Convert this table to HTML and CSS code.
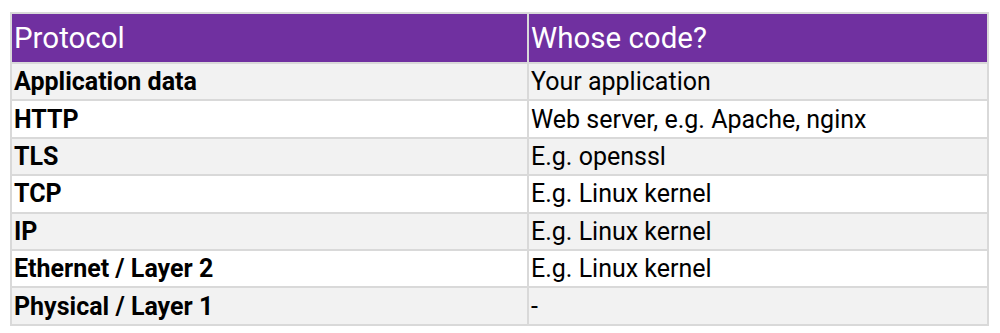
FILE: index.html
```html
<!DOCTYPE html>
<html lang="en">
<head>
    <meta charset="UTF-8">
    <title>Protocol stack</title>
    <link rel="stylesheet" href="styles.css">
</head>
<body>
    <table class="stack">
        <thead>
            <tr>
                <th class="col-proto">Protocol</th>
                <th>Whose code?</th>
            </tr>
        </thead>
        <tbody>
            <tr><td class="proto">Application data</td><td>Your application</td></tr>
            <tr><td class="proto">HTTP</td><td>Web server, e.g. Apache, nginx</td></tr>
            <tr><td class="proto">TLS</td><td>E.g. openssl</td></tr>
            <tr><td class="proto">TCP</td><td>E.g. Linux kernel</td></tr>
            <tr><td class="proto">IP</td><td>E.g. Linux kernel</td></tr>
            <tr><td class="proto">Ethernet / Layer 2</td><td>E.g. Linux kernel</td></tr>
            <tr><td class="proto">Physical / Layer 1</td><td>-</td></tr>
        </tbody>
    </table>
</body>
</html>
```
FILE: styles.css
```css
:root {
    --purple: #7030a0;
    --row-alt: #f2f2f2;
    --line: #d9d9d9;
}
* { box-sizing: border-box; margin: 0; padding: 0; }
body {
    font-family: Roboto, 'Liberation Sans', sans-serif;
    background: #fff;
    color: #000;
    padding: 12px 0 0 10px;
}
.stack {
    border-collapse: collapse;
    width: 979px;
    table-layout: fixed;
}
.stack th, .stack td {
    border: 2px solid var(--line);
    text-align: left;
    padding: 0 2px;
    white-space: nowrap;
}
.stack th {
    background: var(--purple);
    color: #fff;
    font-weight: 400;
    font-size: 29.5px;
    height: 50px;
}
.col-proto { width: 517px; }
.stack td {
    font-size: 25px;
    height: 37.4px;
}
.stack tbody tr:nth-child(odd) td { background: var(--row-alt); }
.stack td.proto { font-weight: 700; }
```
